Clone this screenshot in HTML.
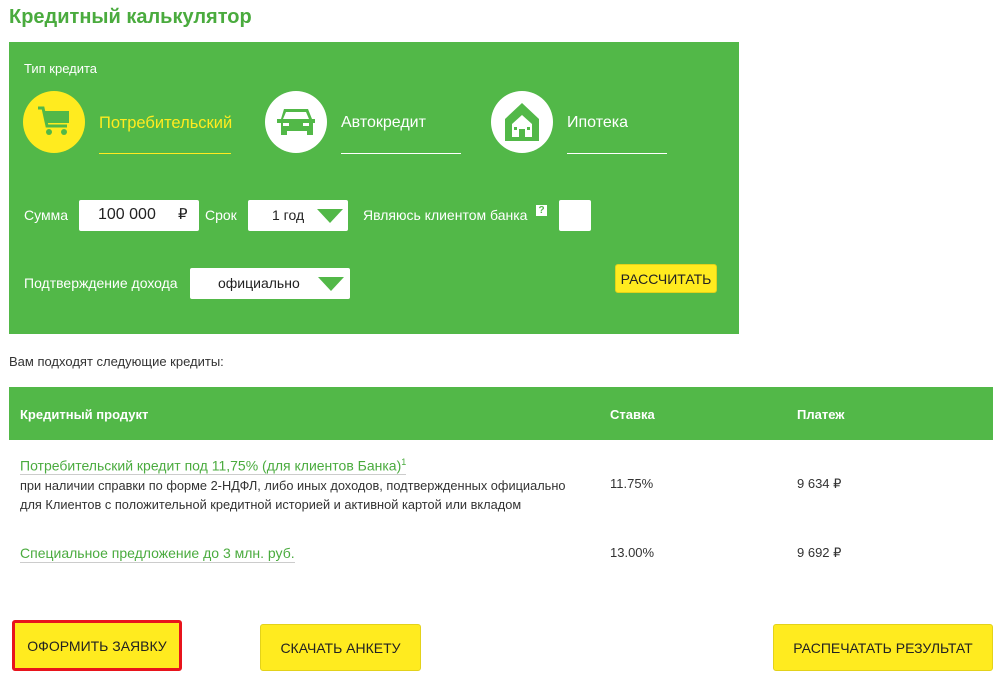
<!DOCTYPE html><html><head><meta charset="utf-8"><style>
*{margin:0;padding:0;box-sizing:border-box}
body{width:1002px;height:682px;background:#fff;font-family:"Liberation Sans",sans-serif;position:relative;overflow:hidden;color:#333}
.a{position:absolute}
.g{background:#52b848}
.w{color:#fff}
.circ{position:absolute;width:62px;height:62px;border-radius:50%;background:#fff}
.ul{position:absolute;height:1px;background:#fff}
.box{position:absolute;background:#fff;border-radius:2px}
.tri{position:absolute;width:0;height:0;border-left:13px solid transparent;border-right:13px solid transparent;border-top:14px solid #52b848}
.btn{position:absolute;background:#ffeb1f;border:1px solid #e3d21a;border-radius:3px;font-size:14px;color:#222;display:flex;align-items:center;justify-content:center}
</style></head><body>
<div class="a" style="left:9px;top:6px;font-size:20px;font-weight:bold;color:#4aab3e">Кредитный калькулятор</div>
<div class="a g" style="left:9px;top:42px;width:730px;height:292px"></div>
<div class="a w" style="left:24px;top:61px;font-size:13px">Тип кредита</div>
<div class="circ" style="left:23px;top:91px;background:#ffeb1f"></div>
<svg class="a" style="left:36px;top:106px" width="38" height="32" viewBox="0 0 38 32"><path d="M2 2h5l4 18h20" fill="none" stroke="#52b848" stroke-width="3"/><rect x="9" y="5" width="24" height="12" fill="#52b848"/><circle cx="13" cy="26" r="3" fill="#52b848"/><circle cx="28" cy="26" r="3" fill="#52b848"/></svg>
<div class="a" style="left:99px;top:114px;font-size:16.5px;color:#ffeb1f">Потребительский</div>
<div class="ul" style="left:99px;top:153px;width:132px;background:#ffeb1f"></div>
<div class="circ" style="left:265px;top:91px"></div>
<svg class="a" style="left:276px;top:105px" width="40" height="34" viewBox="0 0 40 34"><path d="M8 4h24l4 10h3v4h-2v12h-6v-4H11v4H5V18H1v-4h4z" fill="#52b848"/><path d="M10 7h20l3 7H7z" fill="#fff"/><rect x="7" y="18" width="6" height="3" fill="#fff"/><rect x="27" y="18" width="6" height="3" fill="#fff"/></svg>
<div class="a w" style="left:341px;top:114px;font-size:16px">Автокредит</div>
<div class="ul" style="left:341px;top:153px;width:120px"></div>
<div class="circ" style="left:491px;top:91px"></div>
<svg class="a" style="left:503px;top:101px" width="38" height="42" viewBox="0 0 38 42"><path d="M19 2L2 18v22h34V18z" fill="#52b848"/><path d="M19 14L9 23v13h20V23z" fill="#fff"/><rect x="16" y="28" width="6" height="8" fill="#52b848"/><rect x="11" y="26" width="3" height="3" fill="#52b848"/><rect x="24" y="26" width="3" height="3" fill="#52b848"/></svg>
<div class="a w" style="left:567px;top:114px;font-size:16px">Ипотека</div>
<div class="ul" style="left:567px;top:153px;width:100px"></div>
<div class="a w" style="left:24px;top:207px;font-size:14px">Сумма</div>
<div class="box" style="left:79px;top:200px;width:120px;height:31px"></div>
<div class="a" style="left:98px;top:206px;font-size:16px;color:#222">100 000</div>
<div class="a" style="left:178px;top:205px;font-size:15px;color:#222">₽</div>
<div class="a w" style="left:205px;top:207px;font-size:14px">Срок</div>
<div class="box" style="left:248px;top:200px;width:100px;height:31px"></div>
<div class="a" style="left:272px;top:207px;font-size:14px;color:#222">1 год</div>
<div class="tri" style="left:317px;top:209px"></div>
<div class="a w" style="left:363px;top:207px;font-size:14px">Являюсь клиентом банка</div>
<div class="a" style="left:536px;top:205px;width:11px;height:11px;background:#fff;color:#52b848;font-size:10px;font-weight:bold;text-align:center;line-height:11px">?</div>
<div class="box" style="left:559px;top:200px;width:32px;height:31px"></div>
<div class="a w" style="left:24px;top:275px;font-size:14px">Подтверждение дохода</div>
<div class="box" style="left:190px;top:268px;width:160px;height:31px"></div>
<div class="a" style="left:218px;top:275px;font-size:14px;color:#222">официально</div>
<div class="tri" style="left:318px;top:277px"></div>
<div class="btn" style="left:615px;top:264px;width:102px;height:29px;font-size:14px">РАССЧИТАТЬ</div>
<div class="a" style="left:9px;top:354px;font-size:13px;color:#333">Вам подходят следующие кредиты:</div>
<div class="a g" style="left:9px;top:387px;width:984px;height:53px"></div>
<div class="a w" style="left:20px;top:407px;font-size:13px;font-weight:bold">Кредитный продукт</div>
<div class="a w" style="left:610px;top:407px;font-size:13px;font-weight:bold">Ставка</div>
<div class="a w" style="left:797px;top:407px;font-size:13px;font-weight:bold">Платеж</div>
<div class="a" style="left:20px;top:457px;font-size:14px;color:#4aab3e;border-bottom:1px solid #ccc;padding-bottom:0">Потребительский кредит под 11,75% (для клиентов Банка)<sup style="font-size:9px">1</sup></div>
<div class="a" style="left:20px;top:476px;font-size:12.8px;line-height:19px;color:#333">при наличии справки по форме 2-НДФЛ, либо иных доходов, подтвержденных официально<br>для Клиентов с положительной кредитной историей и активной картой или вкладом</div>
<div class="a" style="left:610px;top:476px;font-size:13px">11.75%</div>
<div class="a" style="left:797px;top:476px;font-size:13px">9 634 ₽</div>
<div class="a" style="left:20px;top:545px;font-size:14px;color:#4aab3e;border-bottom:1px solid #ccc;padding-bottom:1px">Специальное предложение до 3 млн. руб.</div>
<div class="a" style="left:610px;top:545px;font-size:13px">13.00%</div>
<div class="a" style="left:797px;top:545px;font-size:13px">9 692 ₽</div>
<div class="btn" style="left:12px;top:620px;width:170px;height:51px;border:3px solid #e8141c">ОФОРМИТЬ ЗАЯВКУ</div>
<div class="btn" style="left:260px;top:624px;width:161px;height:47px">СКАЧАТЬ АНКЕТУ</div>
<div class="btn" style="left:773px;top:624px;width:220px;height:47px">РАСПЕЧАТАТЬ РЕЗУЛЬТАТ</div>
</body></html>
